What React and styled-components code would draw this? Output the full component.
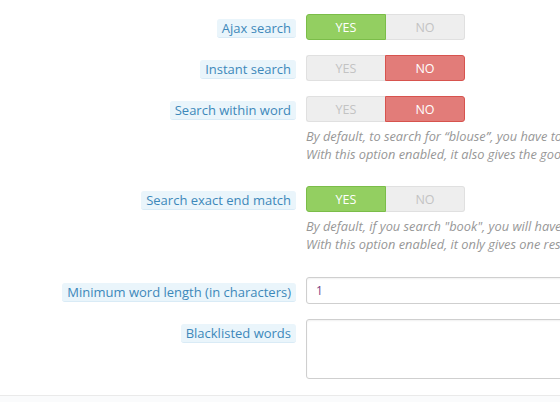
import styled, { createGlobalStyle } from "styled-components";

const GlobalStyle = createGlobalStyle`
  * {
    box-sizing: border-box;
  }
  html, body {
    margin: 0;
    padding: 0;
    background: #fff;
    overflow: hidden;
  }
  body {
    font-family: "Open Sans", "Liberation Sans", sans-serif;
    font-size: 13px;
    color: #555;
  }
`;

const Panel = styled.div`
  width: 560px;
  height: 402px;
  overflow: hidden;
  display: flex;
  flex-direction: column;
`;

const Form = styled.div`
  padding-top: 14px;
  display: flex;
  flex-direction: column;
`;

const Group = styled.div`
  display: grid;
  grid-template-columns: 296px 700px;
  column-gap: 10px;
  margin-top: ${(p) => p.$mt || 0}px;
  margin-bottom: ${(p) => (p.$last ? "16px" : "15px")};
`;

const LabelCell = styled.div`
  display: flex;
  justify-content: flex-end;
  align-items: flex-start;
  padding-top: ${(p) => (p.$top ? p.$top : 5)}px;
`;

const Label = styled.span`
  display: inline-block;
  height: 19px;
  line-height: 18px;
  padding: 0 5px;
  font-size: 13px;
  color: #3d88ba;
  background: #eaf5fb;
  border-bottom: 1px solid #d9ebf6;
  border-radius: 3px;
  white-space: nowrap;
`;

const Control = styled.div`
  display: flex;
  flex-direction: column;
  align-items: flex-start;
`;

const Switch = styled.div`
  display: flex;
  width: 159px;
  height: 26px;
`;

const Half = styled.div`
  flex: 1;
  display: flex;
  align-items: center;
  justify-content: center;
  font-size: 12.5px;
  text-transform: uppercase;
  border: 1px solid
    ${(p) => (p.$on ? (p.$kind === "yes" ? "#7bbd49" : "#d7534e") : "#e0e0e0")};
  background: ${(p) =>
    p.$on ? (p.$kind === "yes" ? "#93cf61" : "#e27c79") : "#eeeeee"};
  color: ${(p) => (p.$on ? "#fff" : "#c3c3c3")};
  border-radius: ${(p) => (p.$kind === "yes" ? "3px 0 0 3px" : "0 3px 3px 0")};
  ${(p) => (p.$kind === "yes" ? "border-right: none;" : "border-left: none;")}
  ${(p) =>
    p.$on && p.$kind === "no" ? "border-left: 1px solid #d7534e;" : ""}
  ${(p) =>
    p.$on && p.$kind === "yes" ? "border-right: 1px solid #7bbd49;" : ""}
`;

const Help = styled.p`
  margin: 5px 0 8px;
  font-size: 12.8px;
  line-height: 18px;
  font-style: italic;
  color: #979797;
  white-space: nowrap;
`;

const Input = styled.input`
  width: 600px;
  height: 27px;
  padding: 0 9px;
  font-family: inherit;
  font-size: 12px;
  color: #7a3f86;
  border: 1px solid #cfcfcf;
  border-radius: 3px;
  background: #fff;
  box-shadow: inset 0 1px 2px rgba(0, 0, 0, 0.06);
  outline: none;
`;

const TextArea = styled.textarea`
  width: 600px;
  height: 60px;
  padding: 6px 9px;
  font-family: inherit;
  font-size: 12px;
  border: 1px solid #cfcfcf;
  border-radius: 3px;
  background: #fff;
  box-shadow: inset 0 1px 2px rgba(0, 0, 0, 0.06);
  resize: none;
  outline: none;
`;

const Footer = styled.div`
  flex: 1;
  border-top: 1px solid #eaeaea;
  background: #fafbfc;
`;

function Toggle({ value }) {
  return (
    <Switch>
      <Half $kind="yes" $on={value}>
        Yes
      </Half>
      <Half $kind="no" $on={!value}>
        No
      </Half>
    </Switch>
  );
}

const switches = [
  { label: "Ajax search", value: true },
  { label: "Instant search", value: false },
  {
    label: "Search within word",
    value: false,
    help: [
      "By default, to search for \u201cblouse\u201d, you have to enter \u201cblous\u201d, \u201cblo\u201d, etc (beginning of the word) \u2013 but not \u201clous\u201d, nor \u201couse\u201d.",
      "With this option enabled, it also gives the good result if you search for \u201clous\u201d or \u201couse\u201d.",
    ],
  },
  {
    label: "Search exact end match",
    value: true,
    help: [
      'By default, if you search "book", you will have "book", "bookcase" and "bookend".',
      'With this option enabled, it only gives one result: "book".',
    ],
  },
];

export default function App() {
  return (
    <>
      <GlobalStyle />
      <Panel>
        <Form>
          {switches.map((s) => (
            <Group key={s.label}>
              <LabelCell>
                <Label>{s.label}</Label>
              </LabelCell>
              <Control>
                <Toggle value={s.value} />
                {s.help && (
                  <Help>
                    {s.help[0]}
                    <br />
                    {s.help[1]}
                  </Help>
                )}
              </Control>
            </Group>
          ))}
          <Group $mt={1}>
            <LabelCell $top={6}>
              <Label>Minimum word length (in characters)</Label>
            </LabelCell>
            <Control>
              <Input type="text" defaultValue="1" />
            </Control>
          </Group>
          <Group $last>
            <LabelCell>
              <Label>Blacklisted words</Label>
            </LabelCell>
            <Control>
              <TextArea />
            </Control>
          </Group>
        </Form>
        <Footer />
      </Panel>
    </>
  );
}
